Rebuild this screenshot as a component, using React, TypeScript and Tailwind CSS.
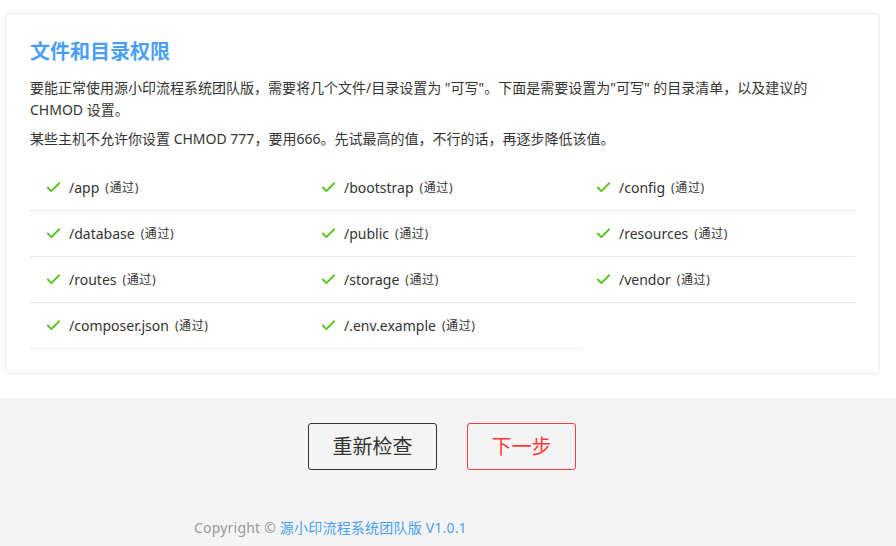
import { Check } from "lucide-react";

const dirs = [
  "/app",
  "/bootstrap",
  "/config",
  "/database",
  "/public",
  "/resources",
  "/routes",
  "/storage",
  "/vendor",
  "/composer.json",
  "/.env.example",
];

export default function App() {
  return (
    <div
      className="min-h-[546px] flex flex-col bg-white text-[#333]"
      style={{ fontFamily: '"Noto Sans", "Noto Sans CJK SC", sans-serif' }}
    >
      <div className="pt-[13px] px-[5px] pb-[24px]">
        <div className="w-[875px] border border-[#ebebeb] rounded-[4px] px-[24px] pt-[24px] pb-[24px]">
          <h1 className="text-[20px] leading-[28px] font-bold text-[#4a9ff5]">
            文件和目录权限
          </h1>
          <p className="mt-[11px] text-[14px] leading-[22px]">
            要能正常使用源小印流程系统团队版，需要将几个文件/目录设置为 "可写"。下面是需要设置为"可写" 的目录清单，以及建议的
            <br />
            CHMOD 设置。
          </p>
          <p className="mt-[7px] text-[14px] leading-[22px]">
            某些主机不允许你设置 CHMOD 777，要用666。先试最高的值，不行的话，再逐步降低该值。
          </p>
          <div className="mt-[15px] grid grid-cols-3">
            {dirs.map((d) => (
              <div
                key={d}
                className="h-[46px] flex items-center pl-[15px] border-b border-[#ebebeb]"
              >
                <Check className="w-[17px] h-[17px] text-[#52c41a]" strokeWidth={2.5} />
                <span className="ml-[7px] text-[14px]">{d}</span>
                <span className="ml-[6px] text-[12px] tracking-[0.6px]">(通过)</span>
              </div>
            ))}
          </div>
        </div>
      </div>
      <div className="flex-1 bg-[#f4f4f4] pt-[25px]">
        <div className="flex justify-center gap-[30px] pr-[12px]">
          <button
            type="button"
            className="w-[129px] h-[47px] border border-[#333] rounded-[3px] text-[20px] text-[#333]"
          >
            重新检查
          </button>
          <button
            type="button"
            className="w-[109px] h-[47px] border border-[#ff3b3b] rounded-[3px] text-[20px] text-[#ff3b3b]"
          >
            下一步
          </button>
        </div>
        <p className="mt-[48px] pl-[194px] text-[14px] leading-[20px] tracking-[0.2px] text-[#999]">
          Copyright © <span className="text-[#4a9ff5]">源小印流程系统团队版 V1.0.1</span>
        </p>
      </div>
    </div>
  );
}
